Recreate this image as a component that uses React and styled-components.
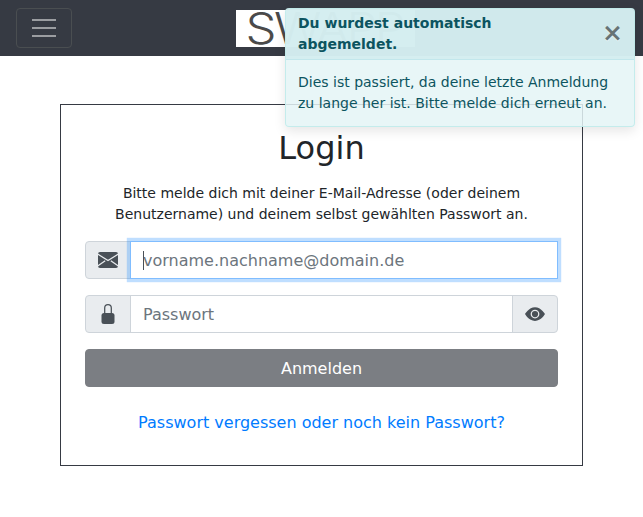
import React from 'react';
import styled, { createGlobalStyle } from 'styled-components';

const GlobalStyle = createGlobalStyle`
  *, *::before, *::after { box-sizing: border-box; }
  body {
    margin: 0;
    background: #fff;
    color: #212529;
    font-family: "DejaVu Sans", sans-serif;
    font-size: 16px;
    line-height: 1.5;
  }
`;

const Page = styled.div`
  min-height: 517px;
`;

const Navbar = styled.header`
  display: grid;
  grid-template-columns: 1fr auto 1fr;
  align-items: center;
  height: 56px;
  padding: 8px 16px;
  background: #363a43;
`;

const Toggler = styled.button`
  display: flex;
  justify-self: start;
  padding: 4px 12px;
  border: 1px solid #4a4e51;
  border-radius: 4px;
  background: transparent;

  svg { display: block; }
`;

const Logo = styled.svg`
  display: block;
  margin: 1px 0 0 8px;
`;

const Card = styled.main`
  width: 523px;
  height: 362px;
  margin: 48px 0 0 60px;
  padding: 24px;
  border: 1px solid #363a43;
`;

const Title = styled.h2`
  margin: 0 0 16px;
  font-size: 32px;
  font-weight: 400;
  line-height: 38px;
  text-align: center;
`;

const Intro = styled.p`
  margin: 0 0 16px;
  font-size: 14px;
  line-height: 21px;
  text-align: center;
`;

const InputGroup = styled.div`
  display: flex;
  height: 38px;
  margin-bottom: 16px;
`;

const Addon = styled.span`
  display: flex;
  flex: none;
  align-items: center;
  justify-content: center;
  width: 46px;
  border: 1px solid #ced4da;
  border-radius: ${({ $end }) => ($end ? '0 4px 4px 0' : '4px 0 0 4px')};
  background: #e9ecef;
  color: #495057;

  svg { display: block; }
`;

const Field = styled.div`
  position: relative;
  display: flex;
  flex: 1;
  min-width: 0;
  margin-left: -1px;
  margin-right: ${({ $joined }) => ($joined ? '-1px' : '0')};
`;

const Input = styled.input`
  width: 100%;
  padding: 8px 12px 6px;
  border: 1px solid ${({ $active }) => ($active ? '#80bdff' : '#ced4da')};
  border-radius: 0;
  outline: none;
  box-shadow: ${({ $active }) => ($active ? '0 0 0 3.2px rgba(0, 123, 255, 0.25)' : 'none')};
  background: #fff;
  color: #495057;
  font: inherit;

  &::placeholder {
    color: #6c757d;
    opacity: 1;
  }
`;

const Caret = styled.span`
  position: absolute;
  left: 13px;
  top: 10px;
  width: 1px;
  height: 19px;
  background: #495057;
`;

const Submit = styled.button`
  display: block;
  width: 100%;
  height: 38px;
  padding: 7px 12px 5px;
  border: 1px solid #363a41;
  border-radius: 4px;
  background: #363a41;
  color: #fff;
  font: inherit;
  opacity: 0.65;
`;

const ForgotLink = styled.a`
  display: block;
  margin-top: 24px;
  color: #007bff;
  text-align: center;
  text-decoration: none;
`;

const Toast = styled.aside`
  position: absolute;
  top: 8px;
  right: 8px;
  width: 350px;
  overflow: hidden;
  border: 1px solid rgba(190, 235, 235, 0.85);
  border-radius: 4px;
  background: rgba(228, 244, 246, 0.85);
  box-shadow: 0 4px 12px rgba(0, 0, 0, 0.1);
  color: #0c5460;
  font-size: 14px;
  line-height: 21px;
`;

const ToastHeader = styled.div`
  display: flex;
  align-items: center;
  justify-content: space-between;
  height: 51px;
  padding: 4px 12px;
  border-bottom: 1px solid rgba(190, 229, 235, 0.85);
  background: rgba(209, 236, 239, 0.85);
`;

const ToastTitle = styled.strong`
  max-width: 230px;
`;

const Close = styled.button`
  margin: 0 -1px 3px 0;
  padding: 0;
  border: 0;
  background: transparent;
  color: #000;
  font: bold 25px/25px "DejaVu Sans", sans-serif;
  text-shadow: 0 1px 0 #fff;
  opacity: 0.5;
`;

const ToastBody = styled.div`
  padding: 12px;
`;

const Icon = ({ size = 20, children }) => (
  <svg width="20" height="20" viewBox={`0 0 ${size} ${size}`} fill="currentColor">{children}</svg>
);

export default function App() {
  return (
    <Page>
      <GlobalStyle />
      <Navbar>
        <Toggler aria-label="Menü">
          <svg width="30" height="30" viewBox="0 0 30 30">
            <path d="M3 7h24M3 15h24M3 23h24" stroke="rgba(255,255,255,.5)" strokeWidth="2" />
          </svg>
        </Toggler>
        <Logo width="179" height="37" viewBox="0 0 179 37">
          <rect width="179" height="37" fill="#fff" />
          <text transform="translate(9.5 33.5) scale(1.14 1)" fill="#4a4a4a" fontFamily="Inter, sans-serif" fontWeight="300" fontSize="43" letterSpacing="-2.2">SWAPP</text>
        </Logo>
      </Navbar>
      <Card>
        <Title>Login</Title>
        <Intro>
          Bitte melde dich mit deiner E-Mail-Adresse (oder deinem Benutzername) und deinem selbst gewählten Passwort an.
        </Intro>
        <InputGroup>
          <Addon>
            <Icon>
              <rect y="2.1" width="20" height="15.8" rx="2" />
              <path d="M-.5 4L10 10.6 20.5 4M-.5 16.2L7.2 10.8M20.5 16.2l-7.7-5.4" fill="none" stroke="#e9ecef" strokeWidth="1.25" />
            </Icon>
          </Addon>
          <Field>
            <Input $active placeholder="vorname.nachname@domain.de" />
            <Caret />
          </Field>
        </InputGroup>
        <InputGroup>
          <Addon>
            <Icon>
              <rect x="3.5" y="9" width="13" height="11" rx="2.5" />
              <path d="M6.7 9.5V4a3.3 3.3 0 016.6 0v5.5" fill="none" stroke="currentColor" strokeWidth="1.25" />
            </Icon>
          </Addon>
          <Field $joined>
            <Input type="password" placeholder="Passwort" />
          </Field>
          <Addon $end>
            <Icon size={16}>
              <path d="M10.5 8a2.5 2.5 0 11-5 0 2.5 2.5 0 015 0z" />
              <path fillRule="evenodd" d="M0 8s3-5.5 8-5.5S16 8 16 8s-3 5.5-8 5.5S0 8 0 8zm8 3.5a3.5 3.5 0 100-7 3.5 3.5 0 000 7z" />
            </Icon>
          </Addon>
        </InputGroup>
        <Submit disabled>Anmelden</Submit>
        <ForgotLink href="#">Passwort vergessen oder noch kein Passwort?</ForgotLink>
      </Card>
      <Toast role="alert">
        <ToastHeader>
          <ToastTitle>Du wurdest automatisch abgemeldet.</ToastTitle>
          <Close aria-label="Close">×</Close>
        </ToastHeader>
        <ToastBody>
          Dies ist passiert, da deine letzte Anmeldung zu lange her ist. Bitte melde dich erneut an.
        </ToastBody>
      </Toast>
    </Page>
  );
}
